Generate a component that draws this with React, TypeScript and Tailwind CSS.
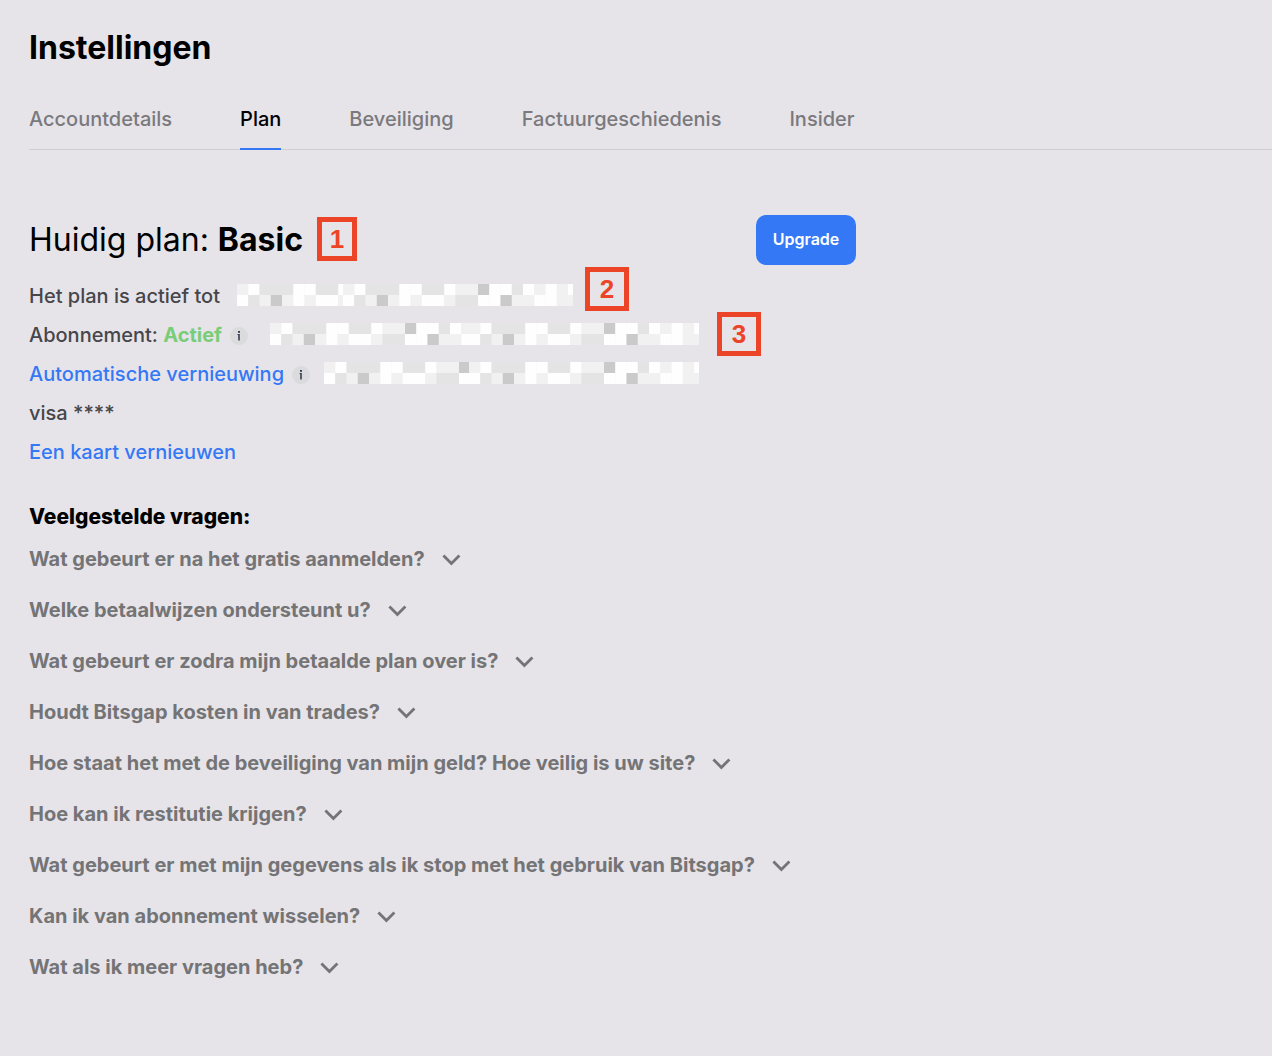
import { useState } from "react";
import type { ReactNode } from "react";

const TABS = ["Accountdetails", "Plan", "Beveiliging", "Factuurgeschiedenis", "Insider"];

const QUESTIONS = [
  "Wat gebeurt er na het gratis aanmelden?",
  "Welke betaalwijzen ondersteunt u?",
  "Wat gebeurt er zodra mijn betaalde plan over is?",
  "Houdt Bitsgap kosten in van trades?",
  "Hoe staat het met de beveiliging van mijn geld? Hoe veilig is uw site?",
  "Hoe kan ik restitutie krijgen?",
  "Wat gebeurt er met mijn gegevens als ik stop met het gebruik van Bitsgap?",
  "Kan ik van abonnement wisselen?",
  "Wat als ik meer vragen heb?",
];

// two rows of mosaic cells, one letter per cell
const MOSAIC = ["fWeeeWWeeWffCWWeWfWfW", "WefCfWfWWfeeWWCffWWff"];
const CELL = 11.25;
const SHADES: Record<string, string> = { W: "#fefefe", f: "#f1f1f1", e: "#e4e4e4", C: "#cacaca" };

function MosaicStrip({ width }: { width: number }) {
  return (
    <svg width={width} height="22" viewBox={`0 0 ${width} 22`} className="block shrink-0" aria-hidden="true">
      {MOSAIC.map((row, y) =>
        row.split("").map((c, x) => (
          <rect key={`${x}-${y}`} x={x * CELL} y={y * 11} width={CELL + 0.3} height="11" fill={SHADES[c]} />
        ))
      )}
    </svg>
  );
}

// Hidden value: a cut-off strip followed by a full one
function Redacted({ lead, children }: { lead: number; children?: ReactNode }) {
  return (
    <span className="relative mb-1 flex shrink-0">
      <MosaicStrip width={lead} />
      <MosaicStrip width={230} />
      {children}
    </span>
  );
}

function Marker({ label, className }: { label: string; className: string }) {
  return (
    <span
      className={`flex h-11 items-center justify-center border-5 border-[#ec4427] font-['Liberation_Sans',sans-serif] text-[26px] leading-none font-bold text-[#ec4427] ${className}`}
    >
      {label}
    </span>
  );
}

function InfoButton({ label }: { label: string }) {
  return (
    <button type="button" aria-label={label} className="flex size-[18px] items-center justify-center rounded-full bg-[#d9dbdd]">
      <svg width="4" height="12" viewBox="0 0 4 12" fill="#3a3b50" aria-hidden="true">
        <rect x="1" y="1" width="2" height="1.8" />
        <path d="M0.6 4h2.2v6.6H1.2V5H0.6z" />
      </svg>
    </button>
  );
}

function Question({ text }: { text: string }) {
  const [open, setOpen] = useState(false);

  return (
    <li>
      <button
        type="button"
        aria-expanded={open}
        onClick={() => setOpen(!open)}
        className="flex items-center gap-4 text-left text-xl leading-[27px] font-bold text-[#747476]"
      >
        {text}
        <svg width="20" height="14" viewBox="0 0 20 14" fill="none" stroke="#747476" strokeWidth="2.8" className={open ? "rotate-180" : ""} aria-hidden="true">
          <path d="M2.4 2.4l8 8 8-8" />
        </svg>
      </button>
    </li>
  );
}

export default function App() {
  const [tab, setTab] = useState("Plan");

  return (
    <main className="min-h-screen bg-[#e6e4e9] pt-7 pb-16 pl-[29px] font-['Inter',sans-serif] text-black">
      <h1 className="text-[32px] leading-10 font-bold">Instellingen</h1>

      <nav className="mt-9 flex gap-[68px] border-b border-[#cfcdd3]">
        {TABS.map((t) => (
          <button
            key={t}
            type="button"
            onClick={() => setTab(t)}
            className={`-mb-px border-b-2 pb-3.5 text-xl leading-[30px] font-medium ${
              t === tab ? "border-[#3478f6] text-black" : "border-transparent text-[#7a797d]"
            }`}
          >
            {t}
          </button>
        ))}
      </nav>

      <section className="mt-[65px]">
        <div className="flex h-[50px] max-w-[827px] items-center justify-between">
          <div className="flex items-center gap-3.5">
            <h2 className="text-[32px] leading-[48px]">
              Huidig plan: <b>Basic</b>
            </h2>
            <Marker label="1" className="mb-0.5 w-10" />
          </div>
          <button type="button" className="h-full w-[100px] rounded-[10px] bg-[#3478f6] pb-0.5 text-base font-semibold text-white">
            Upgrade
          </button>
        </div>

        <div className="mt-3 text-xl leading-[39px] font-medium text-[#47464a]">
          <div className="flex items-center gap-[17px]">
            Het plan is actief tot
            <Redacted lead={106}>
              <Marker label="2" className="absolute -top-[17px] left-full ml-3 w-11" />
            </Redacted>
          </div>
          <div className="flex items-center">
            <span>
              Abonnement: <b className="text-[#79cd78]">Actief</b>
            </span>
            <span className="mr-[22px] ml-2">
              <InfoButton label="Over het abonnement" />
            </span>
            <Redacted lead={199}>
              <Marker label="3" className="absolute -top-[11px] left-full ml-[18px] w-11" />
            </Redacted>
          </div>
          <div className="flex items-center">
            <a href="#vernieuwing" className="text-[#3478f6]">Automatische vernieuwing</a>
            <span className="mr-3.5 ml-2">
              <InfoButton label="Over automatische vernieuwing" />
            </span>
            <Redacted lead={145} />
          </div>
          <p>visa ****</p>
          <a href="#kaart" className="text-[#3478f6]">Een kaart vernieuwen</a>
        </div>
      </section>

      <section className="mt-[30px]">
        <h3 className="text-[21px] leading-[30px] font-extrabold">Veelgestelde vragen:</h3>
        <ul className="mt-3.5 flex flex-col gap-6">
          {QUESTIONS.map((q) => (
            <Question key={q} text={q} />
          ))}
        </ul>
      </section>
    </main>
  );
}
